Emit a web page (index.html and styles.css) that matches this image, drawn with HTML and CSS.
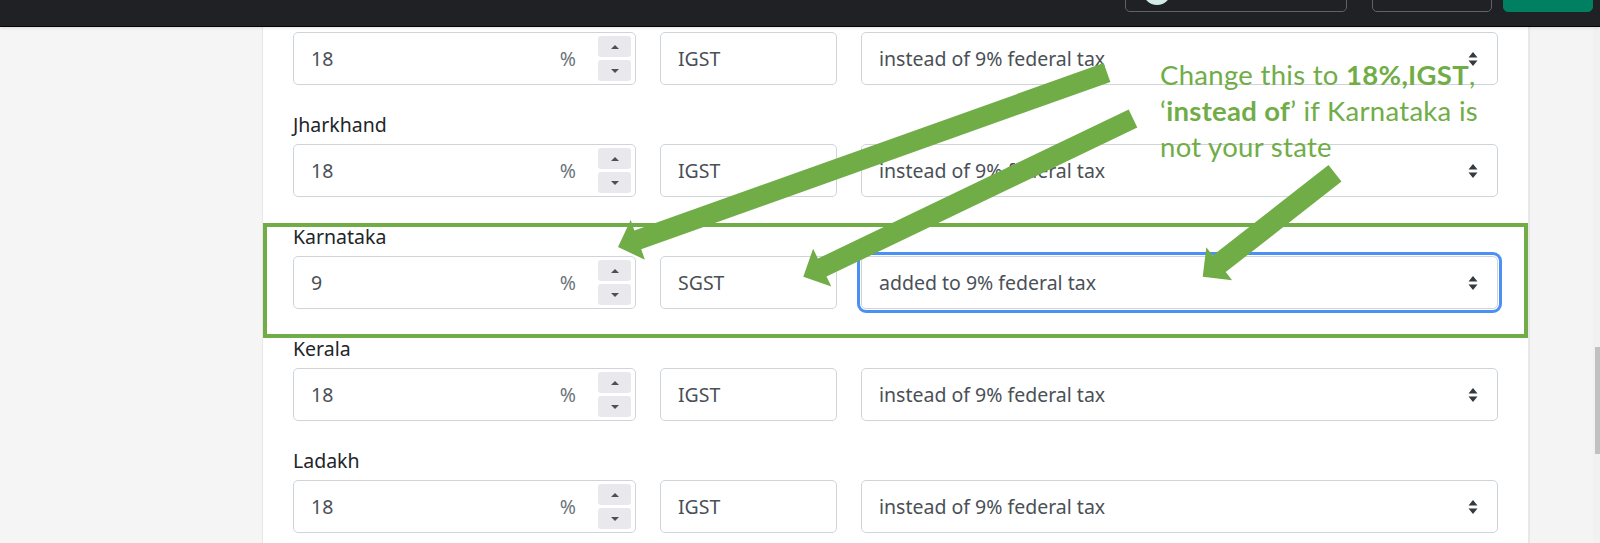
FILE: index.html
```html
<!DOCTYPE html>
<html lang="en">
<head>
<meta charset="utf-8">
<title>GST rates by state</title>
<link rel="stylesheet" href="styles.css">
</head>
<body>
<header class="topbar">
  <div class="tb-btn tb-account"><span class="avatar"></span></div>
  <div class="tb-btn tb-plain"></div>
  <div class="tb-btn tb-primary"></div>
</header>
<main class="layout">
  <aside class="side"></aside>
  <section class="panel">
    <div class="tax-row">
      <div class="controls">
        <div class="field pct"><span class="val">18</span><span class="unit">%</span><span class="spin"><span class="sb"><i class="tri up"></i></span><span class="sb"><i class="tri down"></i></span></span></div>
        <div class="field"><span class="val">IGST</span></div>
        <div class="field select"><span class="val">instead of 9% federal tax</span><svg class="caret" width="10" height="16" viewBox="0 0 10 16"><path d="M5 1 L9.5 6.5 H0.5 Z M5 15 L9.5 9.5 H0.5 Z" fill="#343a40"/></svg></div>
      </div>
    </div>
    <div class="tax-row">
      <label class="state">Jharkhand</label>
      <div class="controls">
        <div class="field pct"><span class="val">18</span><span class="unit">%</span><span class="spin"><span class="sb"><i class="tri up"></i></span><span class="sb"><i class="tri down"></i></span></span></div>
        <div class="field"><span class="val">IGST</span></div>
        <div class="field select"><span class="val">instead of 9% federal tax</span><svg class="caret" width="10" height="16" viewBox="0 0 10 16"><path d="M5 1 L9.5 6.5 H0.5 Z M5 15 L9.5 9.5 H0.5 Z" fill="#343a40"/></svg></div>
      </div>
    </div>
    <div class="tax-row">
      <label class="state">Karnataka</label>
      <div class="controls">
        <div class="field pct"><span class="val">9</span><span class="unit">%</span><span class="spin"><span class="sb"><i class="tri up"></i></span><span class="sb"><i class="tri down"></i></span></span></div>
        <div class="field"><span class="val">SGST</span></div>
        <div class="field select focus"><span class="val">added to 9% federal tax</span><svg class="caret" width="10" height="16" viewBox="0 0 10 16"><path d="M5 1 L9.5 6.5 H0.5 Z M5 15 L9.5 9.5 H0.5 Z" fill="#343a40"/></svg></div>
      </div>
    </div>
    <div class="tax-row">
      <label class="state">Kerala</label>
      <div class="controls">
        <div class="field pct"><span class="val">18</span><span class="unit">%</span><span class="spin"><span class="sb"><i class="tri up"></i></span><span class="sb"><i class="tri down"></i></span></span></div>
        <div class="field"><span class="val">IGST</span></div>
        <div class="field select"><span class="val">instead of 9% federal tax</span><svg class="caret" width="10" height="16" viewBox="0 0 10 16"><path d="M5 1 L9.5 6.5 H0.5 Z M5 15 L9.5 9.5 H0.5 Z" fill="#343a40"/></svg></div>
      </div>
    </div>
    <div class="tax-row">
      <label class="state">Ladakh</label>
      <div class="controls">
        <div class="field pct"><span class="val">18</span><span class="unit">%</span><span class="spin"><span class="sb"><i class="tri up"></i></span><span class="sb"><i class="tri down"></i></span></span></div>
        <div class="field"><span class="val">IGST</span></div>
        <div class="field select"><span class="val">instead of 9% federal tax</span><svg class="caret" width="10" height="16" viewBox="0 0 10 16"><path d="M5 1 L9.5 6.5 H0.5 Z M5 15 L9.5 9.5 H0.5 Z" fill="#343a40"/></svg></div>
      </div>
    </div>
  </section>
  <div class="gutter"></div>
  <div class="scrollbar"><div class="thumb"></div></div>
</main>
<svg class="annot" width="1600" height="543" viewBox="0 0 1600 543">
  <rect x="265" y="225" width="1261" height="111" fill="none" stroke="#70ad47" stroke-width="4"/>
  <polygon fill="#70ad47" points="1103.6,63.1 634.4,230.5 630.7,220.1 618,247 644.9,259.7 641.2,249.3 1110.4,81.9"/>
  <polygon fill="#70ad47" points="1128.7,109.5 817.9,258.6 813.1,248.7 803.3,276.7 831.3,286.5 826.5,276.6 1137.3,127.5"/>
  <polygon fill="#70ad47" points="1328.5,165 1212.7,255.5 1206.3,247.3 1202.7,276.7 1232.1,280.3 1225.7,272.1 1341.5,181.6"/>
</svg>
<p class="note">Change this to <b>18%,IGST</b>,<br>‘<b>instead of</b>’ if Karnataka is<br>not your state</p>
</body>
</html>
```
FILE: styles.css
```css
* { box-sizing: border-box; }
html, body { margin: 0; padding: 0; }
body {
  width: 1600px;
  height: 543px;
  overflow: hidden;
  position: relative;
  background: #f5f5f5;
  font-family: "Noto Sans", "Open Sans", sans-serif;
}
.topbar {
  height: 27px;
  background: #202124;
  border-bottom: 1px solid #050505;
  display: flex;
  justify-content: flex-end;
  align-items: flex-end;
  padding: 0 7px 14px 0;
  overflow: hidden;
  box-shadow: 0 1px 3px rgba(0,0,0,0.12);
  position: relative;
  z-index: 1;
}
.tb-btn {
  flex: none;
  height: 36px;
  border: 1px solid #5f6368;
  border-radius: 5px;
}
.tb-account { width: 222px; margin-right: 25px; display: flex; align-items: flex-start; padding-left: 17px; }
.avatar { width: 28px; height: 28px; border-radius: 50%; background: #d3ebe5; }
.tb-plain { width: 120px; margin-right: 11px; }
.tb-primary { width: 90px; background: #008060; border-color: #008060; }
.layout {
  display: grid;
  grid-template-columns: 262px 1268px 63px 7px;
  height: 516px;
}
.side { background: #f5f5f5; }
.panel {
  background: #fff;
  border-left: 1px solid #e7e7e7;
  border-right: 2px solid #e8e8e8;
  padding: 5px 30px 0;
  overflow: hidden;
}
.gutter { background: #f4f4f4; }
.scrollbar { background: #f1f1f1; padding: 320px 0 0 2px; }
.thumb { height: 107px; background: #c1c1c1; }
.tax-row { margin-bottom: 25px; }
.state {
  display: block;
  font-size: 19.5px;
  line-height: 30px;
  margin-bottom: 4px;
  color: #212529;
}
.controls {
  display: grid;
  grid-template-columns: 343px 177px 1fr;
  gap: 24px;
  height: 53px;
}
.field {
  display: flex;
  align-items: center;
  border: 1px solid #ced4da;
  border-radius: 5px;
  padding-left: 17px;
  font-size: 19.5px;
  color: #495057;
  background: #fff;
  white-space: nowrap;
}
.field .val { flex: 1; }
.pct { padding-right: 4px; align-items: stretch; }
.pct .val, .pct .unit { display: flex; align-items: center; }
.unit { color: #6c757d; margin-right: 22px; }
.spin {
  width: 33px;
  display: flex;
  flex-direction: column;
  gap: 3px;
  padding: 3px 0;
}
.sb {
  flex: 1;
  background: #e9e9ed;
  border-radius: 3px;
  display: flex;
  align-items: center;
  justify-content: center;
}
.tri { display: block; width: 0; height: 0; border-left: 4px solid transparent; border-right: 4px solid transparent; }
.tri.up { border-bottom: 4px solid #505050; }
.tri.down { border-top: 4px solid #505050; }
.select { padding-right: 19px; }
.caret { flex: none; }
.focus { outline: 3px solid #4a90f5; outline-offset: 1px; }
.annot {
  position: absolute;
  top: 0;
  left: 0;
  pointer-events: none;
}
.note {
  position: absolute;
  left: 1160px;
  top: 57px;
  margin: 0;
  font-family: "Lato", "Noto Sans", sans-serif;
  font-size: 27.5px;
  line-height: 36.2px;
  letter-spacing: 0.3px;
  color: #70ad47;
  white-space: nowrap;
}
.note b { font-weight: 700; }
```
